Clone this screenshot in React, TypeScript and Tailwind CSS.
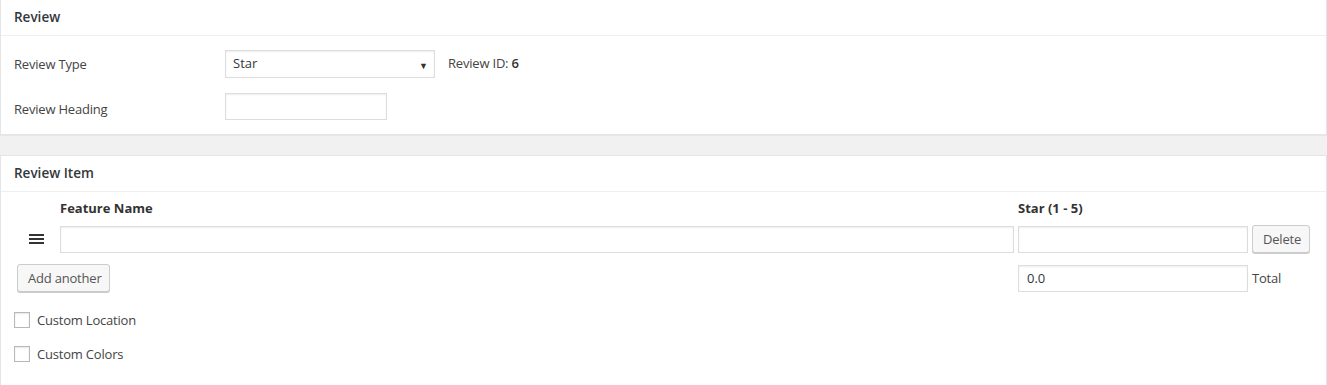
import React from 'react';

const font = { fontFamily: '"Open Sans", "Noto Sans", sans-serif' };

const inputCls =
  'h-[27px] border border-[#ddd] bg-white shadow-[inset_0_1px_2px_rgba(0,0,0,0.07)] px-2 text-[13px] text-[#32373c] outline-none';

const buttonCls =
  'h-[28px] px-[10px] border border-[#ccc] rounded-[3px] bg-[#f7f7f7] shadow-[0_1px_0_#ccc] text-[13px] text-[#555] leading-none whitespace-nowrap tracking-[-0.2px]';

const Checkbox: React.FC<{ label: string }> = ({ label }) => (
  <label className="flex items-center h-[16px] text-[13px] text-[#444] tracking-[-0.2px]">
    <span className="w-[16px] h-[16px] border border-[#b4b9be] bg-white shadow-[inset_0_1px_2px_rgba(0,0,0,0.1)]" />
    <span className="ml-[7px] mt-[1px]">{label}</span>
  </label>
);

const Box: React.FC<{ title: string; children: React.ReactNode; className?: string }> = ({
  title,
  children,
  className = '',
}) => (
  <div className={`bg-white border border-[#e5e5e5] shadow-[0_1px_1px_rgba(0,0,0,0.04)] ${className}`}>
    <div className="h-[36px] flex items-center px-[13px] border-b border-[#eee] text-[13.5px] font-semibold text-[#32373c]">
      {title}
    </div>
    {children}
  </div>
);

export default function App() {
  return (
    <div className="w-[1327px] h-[385px] overflow-hidden bg-[#f1f1f1]" style={font}>
      <Box title="Review" className="border-t-0 h-[135px]">
        <div className="pl-[13px] pt-[14px]">
          <div className="flex items-center h-[28px]">
            <div className="w-[211px] text-[13px] text-[#444] tracking-[-0.2px] mt-[2px]">Review Type</div>
            <div className="relative w-[210px] h-[28px] border border-[#ddd] bg-white shadow-[inset_0_1px_2px_rgba(0,0,0,0.07)] flex items-center px-[7px] text-[13px] text-[#32373c]">
              Star
              <span className="absolute right-[6px] top-[8px] text-[9px] text-[#333]">▼</span>
            </div>
            <div className="ml-[13px] text-[13px] text-[#444] tracking-[-0.2px]">
              Review ID: <span className="font-semibold text-[#333]">6</span>
            </div>
          </div>
          <div className="flex items-center h-[27px] mt-[15px]">
            <div className="w-[211px] text-[13px] text-[#444] tracking-[-0.2px] mt-[6px]">Review Heading</div>
            <input className={`${inputCls} w-[162px]`} />
          </div>
        </div>
      </Box>

      <Box title="Review Item" className="mt-[20px] h-[240px]">
        <div className="pl-[16px] pr-[16px]">
          <div className="flex items-end h-[26px] text-[13px] font-bold text-[#333]">
            <div className="ml-[43px] w-[958px]">Feature Name</div>
            <div>Star (1 - 5)</div>
          </div>
          <div className="flex items-center mt-[7px]">
            <div className="w-[43px] flex pl-[12px]">
              <svg width="15" height="12" viewBox="0 0 15 12">
                <rect x="0" y="1" width="15" height="2" fill="#333" />
                <rect x="0" y="5" width="15" height="2" fill="#333" />
                <rect x="0" y="9" width="15" height="2" fill="#333" />
              </svg>
            </div>
            <input className={`${inputCls} w-[954px]`} />
            <input className={`${inputCls} w-[230px] ml-[4px]`} />
            <button className={`${buttonCls} ml-[4px] w-[58px] px-0`}>Delete</button>
          </div>
          <div className="flex items-center mt-[11px]">
            <button className={`${buttonCls} w-[93px] px-0`}>Add another</button>
            <input className={`${inputCls} w-[230px] ml-[908px]`} defaultValue="0.0" />
            <div className="ml-[4px] text-[13px] text-[#444] mt-[1px] tracking-[-0.2px]">Total</div>
          </div>
        </div>
        <div className="pl-[13px] mt-[20px] flex flex-col gap-[18px]">
          <Checkbox label="Custom Location" />
          <Checkbox label="Custom Colors" />
        </div>
      </Box>
    </div>
  );
}
